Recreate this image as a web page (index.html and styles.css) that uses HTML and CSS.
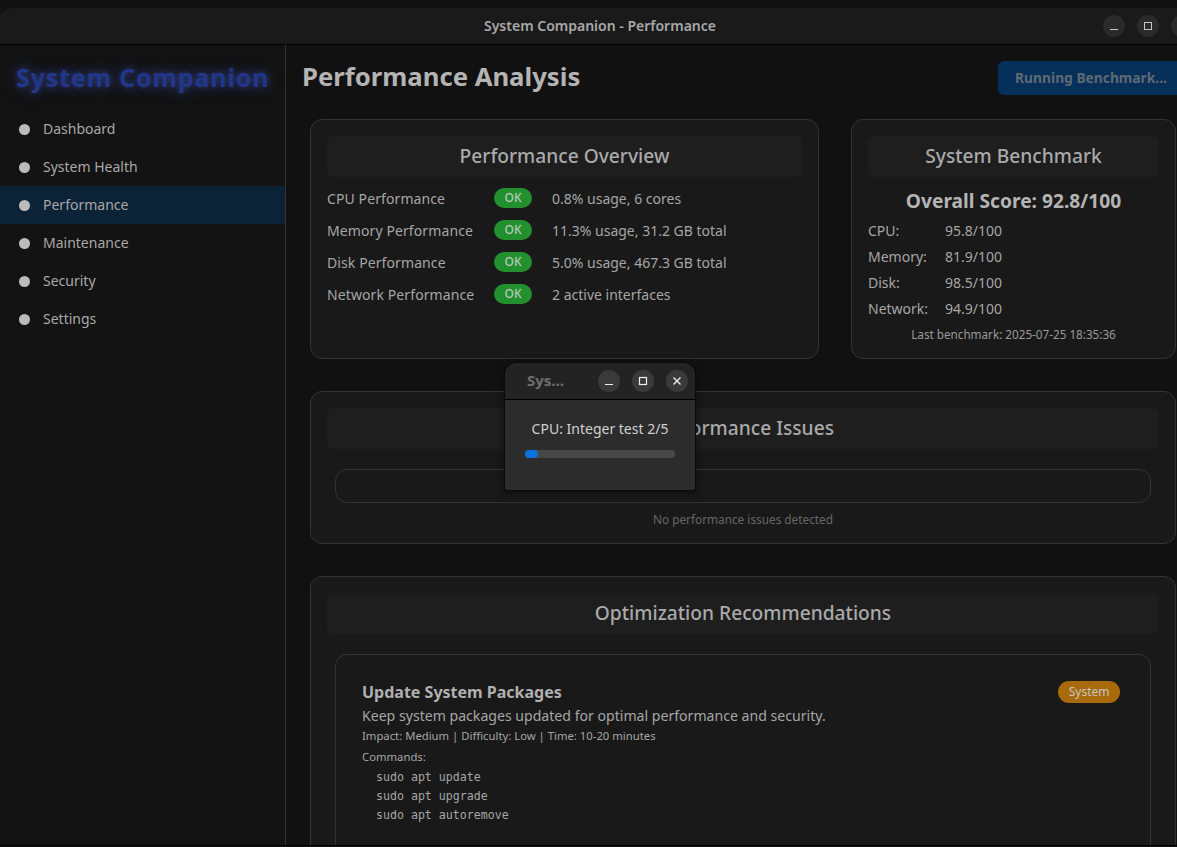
FILE: index.html
```html
<!DOCTYPE html>
<html lang="en">

<head>
    <meta charset="UTF-8">
    <title>System Companion - Performance</title>
    <link rel="stylesheet" href="styles.css">
</head>

<body>
    <div class="window">
        <div class="titlebar">
            <span class="titlebar-text">System Companion - Performance</span>
            <div class="win-buttons">
                <span class="win-btn"><svg width="10" height="10" viewBox="0 0 10 10"><path d="M1 8.5h8" stroke="#c8c8c8" stroke-width="1"/></svg></span>
                <span class="win-btn"><svg width="10" height="10" viewBox="0 0 10 10"><rect x="1.5" y="1.5" width="7" height="7" fill="none" stroke="#c8c8c8" stroke-width="1"/></svg></span>
                <span class="win-btn"><svg width="10" height="10" viewBox="0 0 10 10"><path d="M1.5 1.5l7 7M8.5 1.5l-7 7" stroke="#c8c8c8" stroke-width="1"/></svg></span>
            </div>
        </div>
        <div class="app">
            <div class="sidebar">
                <div class="logo">System Companion</div>
                <div class="nav-item"><span class="dot"></span>Dashboard</div>
                <div class="nav-item"><span class="dot"></span>System Health</div>
                <div class="nav-item active"><span class="dot"></span>Performance</div>
                <div class="nav-item"><span class="dot"></span>Maintenance</div>
                <div class="nav-item"><span class="dot"></span>Security</div>
                <div class="nav-item"><span class="dot"></span>Settings</div>
            </div>
            <div class="main">
                <div class="page-head">
                    <h1>Performance Analysis</h1>
                    <button class="run-btn">Running Benchmark...</button>
                </div>
                <div class="content">
                    <div class="top-row">
                        <div class="card overview">
                            <h2 class="card-title">Performance Overview</h2>
                            <div class="metric"><span>CPU Performance</span><span class="pill">OK</span><span>0.8% usage, 6 cores</span></div>
                            <div class="metric"><span>Memory Performance</span><span class="pill">OK</span><span>11.3% usage, 31.2 GB total</span></div>
                            <div class="metric"><span>Disk Performance</span><span class="pill">OK</span><span>5.0% usage, 467.3 GB total</span></div>
                            <div class="metric"><span>Network Performance</span><span class="pill">OK</span><span>2 active interfaces</span></div>
                        </div>
                        <div class="card">
                            <h2 class="card-title">System Benchmark</h2>
                            <div class="score">Overall Score: 92.8/100</div>
                            <div class="bench"><span>CPU:</span><span>95.8/100</span></div>
                            <div class="bench"><span>Memory:</span><span>81.9/100</span></div>
                            <div class="bench"><span>Disk:</span><span>98.5/100</span></div>
                            <div class="bench"><span>Network:</span><span>94.9/100</span></div>
                            <div class="last-run">Last benchmark: 2025-07-25 18:35:36</div>
                        </div>
                    </div>
                    <div class="card">
                        <h2 class="card-title">Performance Issues</h2>
                        <div class="empty-box"></div>
                        <div class="empty-text">No performance issues detected</div>
                    </div>
                    <div class="card">
                        <h2 class="card-title">Optimization Recommendations</h2>
                        <div class="rec">
                            <div class="rec-head">
                                <h3>Update System Packages</h3>
                                <span class="tag">System</span>
                            </div>
                            <p class="rec-desc">Keep system packages updated for optimal performance and security.</p>
                            <p class="rec-meta">Impact: Medium | Difficulty: Low | Time: 10-20 minutes</p>
                            <p class="rec-meta cmd-label">Commands:</p>
                            <div class="cmd">sudo apt update</div>
                            <div class="cmd">sudo apt upgrade</div>
                            <div class="cmd">sudo apt autoremove</div>
                        </div>
                    </div>
                </div>
            </div>
        </div>
    </div>

    <!-- progress dialog floats over the main window -->
    <div class="dialog">
        <div class="dialog-bar">
            <span class="dialog-title">Sys...</span>
            <span class="dlg-btn"><svg width="12" height="12" viewBox="0 0 12 12"><path d="M2 9.5h8" stroke="#f0f0f0" stroke-width="1.2"/></svg></span>
            <span class="dlg-btn"><svg width="12" height="12" viewBox="0 0 12 12"><rect x="2.5" y="2.5" width="7" height="7" fill="none" stroke="#f0f0f0" stroke-width="1.2"/></svg></span>
            <span class="dlg-btn"><svg width="12" height="12" viewBox="0 0 12 12"><path d="M2.5 2.5l7 7M9.5 2.5l-7 7" stroke="#f0f0f0" stroke-width="1.3"/></svg></span>
        </div>
        <div class="dialog-body">
            <div class="dialog-text">CPU: Integer test 2/5</div>
            <div class="progress"><div class="progress-fill" style="width: 8.7%"></div></div>
        </div>
    </div>
</body>

</html>
```

FILE: styles.css
```css
html,
body {
    margin: 0;
    padding: 0;
    height: 847px;
    overflow: hidden;
}

body {
    background-color: #121212;
    color: #a6a6a6;
    font-family: "Noto Sans", sans-serif;
    font-size: 14px;
}

.window {
    width: 1200px;
    height: 837px;
    margin-top: 8px;
    border-bottom: 1px solid #000;
    border-radius: 12px 12px 0 0;
    overflow: hidden;
    display: flex;
    flex-direction: column;
}

.titlebar {
    height: 37px;
    flex: none;
    box-sizing: border-box;
    padding-bottom: 2px;
    background-color: #1a1a1a;
    border-bottom: 1px solid #000;
    display: flex;
    align-items: center;
    justify-content: center;
    position: relative;
}

.titlebar-text {
    font-weight: 600;
    font-size: 14px;
    color: #a8a8a8;
}

.win-buttons {
    position: absolute;
    right: 7px;
    top: 7px;
    display: flex;
    gap: 12px;
}

.win-btn {
    width: 22px;
    height: 22px;
    border-radius: 50%;
    background-color: #2a2a2a;
    display: flex;
    align-items: center;
    justify-content: center;
}

.app {
    flex: 1;
    display: flex;
    min-height: 0;
}

.sidebar {
    width: 285px;
    flex: none;
    background-color: #131313;
    border-right: 1px solid #333;
}

.logo {
    height: 65px;
    line-height: 65px;
    padding-left: 16px;
    font-size: 25px;
    font-weight: 700;
    letter-spacing: 0.85px;
    color: #22368a;
    text-shadow: 0 0 6px rgba(60, 80, 170, 0.55), 0 0 16px rgba(70, 90, 190, 0.55);
    white-space: nowrap;
}

.nav-item {
    height: 38px;
    box-sizing: border-box;
    padding: 0 0 2px 19px;
    display: flex;
    align-items: center;
    color: #a8a8a8;
}

.nav-item.active {
    background-color: #0c2237;
}

.dot {
    width: 11px;
    height: 11px;
    border-radius: 50%;
    background-color: #bbb;
    margin: 2px 13px 0 0;
}

.main {
    flex: 1;
    min-width: 0;
    background-color: #111;
}

.page-head {
    height: 65px;
    padding: 0 16px;
    display: flex;
    align-items: center;
    justify-content: space-between;
}

.page-head h1 {
    margin: 0 0 2px;
    font-size: 25.7px;
    font-weight: 700;
    color: #b4b4b4;
}

.run-btn {
    width: 186px;
    height: 34px;
    padding: 0 0 1px;
    border: 0;
    border-radius: 6px;
    background-color: #06305a;
    color: #5f6a75;
    font-family: inherit;
    font-size: 13.8px;
    font-weight: 700;
}

.content {
    padding: 9px 24px 0;
    display: flex;
    flex-direction: column;
    gap: 32px;
}

.top-row {
    display: grid;
    grid-template-columns: 509px 325px;
    gap: 32px;
    height: 240px;
}

.card {
    background-color: #191919;
    border: 1px solid #333;
    border-radius: 12px;
    padding: 16px;
}

.card-title {
    margin: 0;
    height: 41px;
    line-height: 40px;
    border-radius: 6px;
    background-color: #1e1e1e;
    text-align: center;
    font-size: 19.2px;
    font-weight: 500;
    color: #aaa;
}

.metric {
    display: grid;
    grid-template-columns: 147px 38px auto;
    column-gap: 20px;
    height: 32px;
    align-items: center;
}

.card-title + .metric {
    margin-top: 5px;
}

.metric span:first-child {
    letter-spacing: 0.1px;
    white-space: nowrap;
}

.pill {
    height: 20px;
    line-height: 20px;
    border-radius: 10px;
    background-color: #22902f;
    color: #b8c8b8;
    font-size: 12px;
    font-weight: 500;
    text-align: center;
}

.score {
    margin-top: 10px;
    height: 28px;
    line-height: 28px;
    text-align: center;
    font-size: 19.2px;
    font-weight: 700;
    color: #b4b4b4;
}

.bench {
    display: grid;
    grid-template-columns: 77px auto;
    height: 26px;
    line-height: 26px;
}

.score + .bench {
    margin-top: 3px;
}

.last-run {
    margin-top: 4px;
    text-align: center;
    font-size: 11.7px;
    color: #999;
}

.empty-box {
    margin: 20px 8px 0;
    height: 32px;
    border: 1px solid #333;
    border-radius: 12px;
}

.empty-text {
    margin-top: 8px;
    text-align: center;
    font-size: 11.8px;
    color: #666;
}

.rec {
    margin: 20px 8px 0;
    border: 1px solid #333;
    border-radius: 12px;
    padding: 26px 30px 0 26px;
    height: 200px;
}

.rec-head {
    display: flex;
    justify-content: space-between;
    align-items: flex-start;
}

.rec h3 {
    margin: 0;
    font-size: 16px;
    font-weight: 700;
    color: #b0b0b0;
}

.tag {
    padding: 0 10.5px;
    height: 22px;
    line-height: 22px;
    border-radius: 11px;
    background-color: #a86a0a;
    color: #c8c8c0;
    font-size: 12px;
}

.rec-desc {
    margin: 3px 0 0;
    font-size: 14.1px;
}

.rec-meta {
    margin: 3px 0 0;
    font-size: 11.3px;
}

.cmd-label {
    margin-top: 6px;
}

.cmd {
    padding-left: 14px;
    height: 19px;
    line-height: 19px;
    font-family: "DejaVu Sans Mono", monospace;
    font-size: 11.6px;
}

.cmd-label + .cmd {
    margin-top: 4px;
}

.dialog {
    position: absolute;
    left: 505px;
    top: 363px;
    width: 190px;
    height: 127px;
    border-radius: 12px 12px 2px 2px;
    background-color: #2c2c2c;
    box-shadow: 0 0 0 1px #0a0a0a, 0 2px 10px rgba(0, 0, 0, 0.6);
    overflow: hidden;
}

.dialog-bar {
    height: 36px;
    box-sizing: content-box;
    background-color: #232323;
    border-bottom: 1px solid #000;
    display: flex;
    align-items: center;
    gap: 12px;
    padding: 0 7px 0 22px;
}

.dialog-title {
    flex: 1;
    padding-bottom: 2px;
    font-weight: 700;
    font-size: 15px;
    color: #6e6e6e;
}

.dlg-btn {
    width: 22px;
    height: 22px;
    border-radius: 50%;
    background-color: #3a3a3a;
    display: flex;
    align-items: center;
    justify-content: center;
}

.dialog-body {
    padding: 19px 20px 0;
}

.dialog-text {
    text-align: center;
    font-size: 14px;
    color: #d0d0d0;
}

.progress {
    margin-top: 12px;
    height: 8px;
    border-radius: 4px;
    background-color: #484848;
}

.progress-fill {
    height: 100%;
    border-radius: 4px;
    background-color: #0a72e0;
}
```
